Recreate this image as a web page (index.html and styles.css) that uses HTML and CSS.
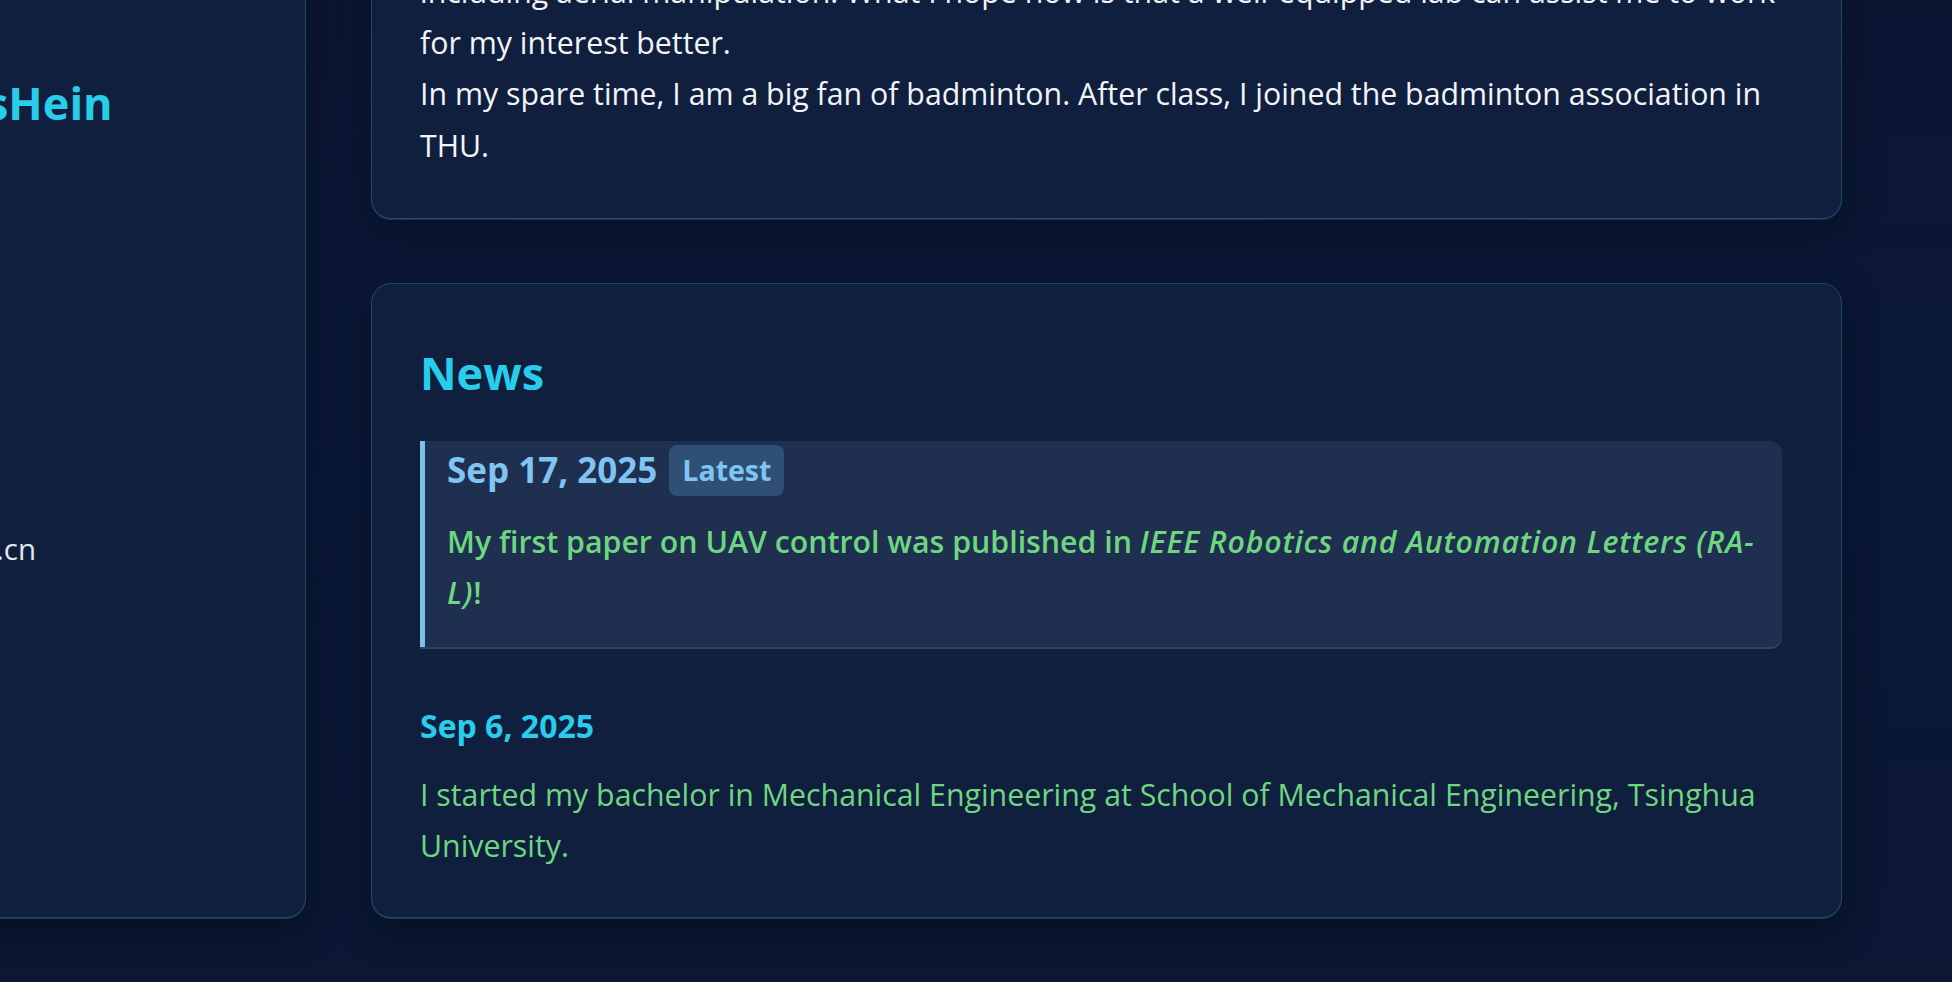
FILE: index.html
```html
<!DOCTYPE html>
<html lang="en">
<head>
<meta charset="utf-8">
<title>Home</title>
<link rel="stylesheet" href="styles.css">
</head>
<body>
<div class="page">
  <aside class="card sidebar">
    <h1 class="name">sHein</h1>
    <p class="email">.cn</p>
  </aside>
  <main class="main">
    <section class="card about">
      <p>including aerial manipulation. What I hope now is that a well-equipped lab can assist me to work for my interest better.</p>
      <p>In my spare time, I am a big fan of badminton. After class, I joined the badminton association in THU.</p>
    </section>
    <section class="card news">
      <h2 class="news-title">News</h2>
      <div class="news-item latest">
        <div class="news-date">Sep 17, 2025 <span class="badge">Latest</span></div>
        <p class="news-text">My first paper on UAV control was published in <em class="venue">IEEE Robotics and Automation Letters (RA-L)</em>!</p>
      </div>
      <div class="news-item">
        <div class="news-date">Sep 6, 2025</div>
        <p class="news-text">I started my bachelor in Mechanical Engineering at School of Mechanical Engineering, Tsinghua University.</p>
      </div>
    </section>
  </main>
</div>
</body>
</html>
```

FILE: styles.css
```css
* { box-sizing: border-box; }
html, body { margin: 0; padding: 0; }
body {
  height: 982px;
  overflow: hidden;
  background: linear-gradient(180deg, #0b1633 0%, #0a1836 50%, #0b1733 100%);
  font-family: "Open Sans", "Noto Sans", sans-serif;
  color: #f1f5f9;
}
.page {
  display: flex;
  align-items: stretch;
  gap: 65px;
  width: 1899px;
  margin: -84px 0 0 -57px;
}
.card {
  background: #111f3e;
  border: 1px solid #1e4868;
  border-radius: 20px;
  box-shadow: 0 1px 0 rgba(30, 72, 104, 0.7), 0 12px 36px rgba(3, 8, 20, 0.45);
}
.sidebar {
  flex: 0 0 363px;
  padding: 48px;
}
.name {
  margin: 110.5px 0 0 -6px;
  font-size: 45px;
  line-height: 54px;
  font-weight: 700;
  color: #28cdec;
  white-space: nowrap;
}
.email {
  margin: 397.5px 0 0 4px;
  font-size: 29.5px;
  line-height: 43.5px;
  color: #e2e8f0;
  white-space: nowrap;
}
.main {
  flex: 0 0 1471px;
  display: flex;
  flex-direction: column;
  gap: 64px;
}
.about {
  padding: 49px 48px 47.5px;
}
.about p {
  margin: 0;
  font-size: 30.3px;
  line-height: 51.2px;
}
.news {
  padding: 48px 48px 46px;
}
.news-title {
  margin: 14.5px 0 41px;
  font-size: 45px;
  line-height: 52.8px;
  font-weight: 700;
  color: #28cdec;
}
.news-item + .news-item {
  margin-top: 55.5px;
}
.news-item.latest {
  margin-right: 11px;
  padding: 4px 24px 29px 22px;
  background: #1e2f50;
  border-left: 5px solid #7dbfeb;
  border-radius: 0 12px 12px 0;
  box-shadow: 0 2px 0 rgba(60, 82, 118, 0.7);
}
.news-date {
  display: flex;
  align-items: center;
  gap: 12px;
  font-size: 32px;
  line-height: 46.5px;
  font-weight: 700;
  color: #28cdec;
}
.latest .news-date {
  font-size: 35px;
  color: #80c4f4;
}
.badge {
  padding: 6.5px 13px;
  font-size: 28.5px;
  line-height: 38px;
  background: #2f4f74;
  border-radius: 8px;
  color: #80c4f4;
}
.news-text {
  margin: 20px 0 0;
  font-size: 30.3px;
  line-height: 51.2px;
  color: #6fd680;
}
.latest .news-text {
  font-weight: 600;
}
.venue {
  letter-spacing: 0.8px;
}
```
